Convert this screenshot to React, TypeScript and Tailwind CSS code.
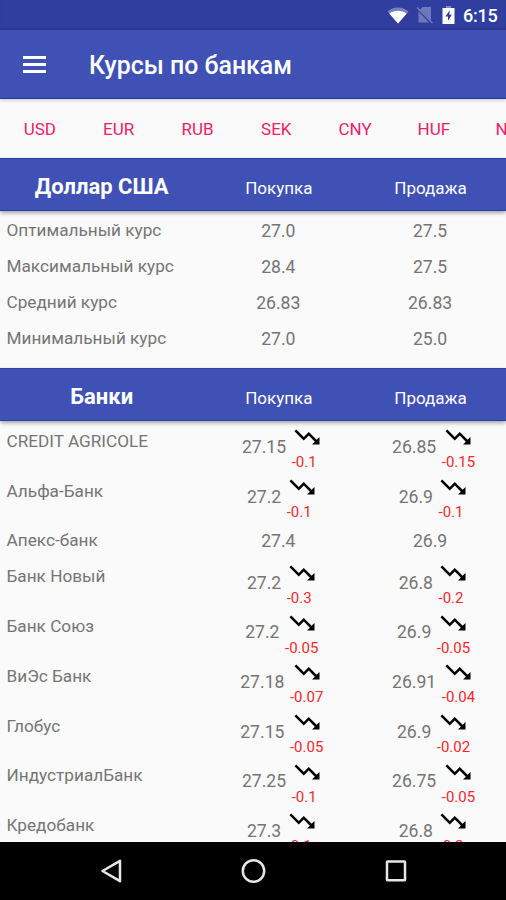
import { MdTrendingDown } from 'react-icons/md'

type Quote = {
  value: string
  change?: string
}

type Bank = {
  name: string
  buy: Quote
  sell: Quote
}

const CURRENCIES = ['USD', 'EUR', 'RUB', 'SEK', 'CNY', 'HUF', 'NOK']

const SUMMARY = [
  { label: 'Оптимальный курс', buy: '27.0', sell: '27.5' },
  { label: 'Максимальный курс', buy: '28.4', sell: '27.5' },
  { label: 'Средний курс', buy: '26.83', sell: '26.83' },
  { label: 'Минимальный курс', buy: '27.0', sell: '25.0' },
]

const BANKS: Bank[] = [
  { name: 'CREDIT AGRICOLE', buy: { value: '27.15', change: '-0.1' }, sell: { value: '26.85', change: '-0.15' } },
  { name: 'Альфа-Банк', buy: { value: '27.2', change: '-0.1' }, sell: { value: '26.9', change: '-0.1' } },
  { name: 'Апекс-банк', buy: { value: '27.4' }, sell: { value: '26.9' } },
  { name: 'Банк Новый', buy: { value: '27.2', change: '-0.3' }, sell: { value: '26.8', change: '-0.2' } },
  { name: 'Банк Союз', buy: { value: '27.2', change: '-0.05' }, sell: { value: '26.9', change: '-0.05' } },
  { name: 'ВиЭс Банк', buy: { value: '27.18', change: '-0.07' }, sell: { value: '26.91', change: '-0.04' } },
  { name: 'Глобус', buy: { value: '27.15', change: '-0.05' }, sell: { value: '26.9', change: '-0.02' } },
  { name: 'ИндустриалБанк', buy: { value: '27.25', change: '-0.1' }, sell: { value: '26.75', change: '-0.05' } },
  { name: 'Кредобанк', buy: { value: '27.3', change: '-0.1' }, sell: { value: '26.8', change: '-0.2' } },
]

function StatusBar() {
  return (
    <div className="flex h-[30px] shrink-0 items-center justify-end bg-[#303f9f] pr-[9px] text-white shadow-[inset_0_-2px_2px_rgba(0,0,0,0.12)]">
      <svg width="22" height="18" viewBox="0 0 22 18" className="mr-[7px]">
        <path d="M0.5 5.5C6.5 0.2 15.5 0.2 21.5 5.5L11 17.5Z" fill="#fff" fillOpacity="0.35" />
        <path d="M2.3 7.4C7.5 3.8 14.5 3.8 19.7 7.4L11 17.5Z" fill="#fff" />
      </svg>
      <svg width="18" height="18" viewBox="0 0 18 18" className="mr-[8px]">
        <path d="M6.5 1H15V14.2L4 3.5Z" fill="#fff" fillOpacity="0.3" />
        <path d="M2.5 5.5L13 16.5H2.5Z" fill="#fff" fillOpacity="0.3" />
        <path d="M1 1.5L16.5 17" stroke="#fff" strokeOpacity="0.35" strokeWidth="1.3" />
      </svg>
      <svg width="13" height="18" viewBox="0 0 13 18" className="mr-[8px]">
        <path d="M4 0H9V2H4Z" fill="#fff" fillOpacity="0.4" />
        <path d="M0.5 2H12.5V18H0.5Z" fill="#fff" />
        <path d="M7.8 4.2L3.4 10.4H6V14.8L9.8 8.8H7.4Z" fill="#303f9f" />
      </svg>
      <span className="w-[34px] pt-px text-[18px] leading-none font-medium tracking-[-0.2px]">6:15</span>
    </div>
  )
}

function Toolbar() {
  return (
    <div className="z-10 flex h-[69px] shrink-0 items-center border-b border-[#2039a0] bg-[#3f51b5] pl-[23px] shadow-[0_2px_3px_rgba(0,0,0,0.15)]">
      <div className="mr-[43px] flex w-[23px] flex-col gap-[4px]">
        <div className="h-[3px] bg-white" />
        <div className="h-[3px] bg-white" />
        <div className="h-[3px] bg-white" />
      </div>
      <h1 className="pt-[4px] text-[24.9px] leading-none font-medium whitespace-nowrap text-white">Курсы по банкам</h1>
    </div>
  )
}

function SectionHeader({ title }: { title: string }) {
  return (
    <div className="z-10 grid h-[53px] shrink-0 grid-cols-[4fr_3fr_3fr] items-center border-y border-[#2a40a8] bg-[#3f51b5] text-center text-white shadow-[0_2px_4px_rgba(0,0,0,0.35)]">
      <h2 className="pt-px pl-px text-[22px] leading-[54px] font-bold">{title}</h2>
      <span className="pt-[5px] pl-px text-[17px]">Покупка</span>
      <span className="pt-[5px] pl-px text-[17px]">Продажа</span>
    </div>
  )
}

function QuoteCell({ quote }: { quote: Quote }) {
  if (!quote.change) {
    return <div className="h-[36px] pt-px text-center text-[17.6px] leading-[36px]">{quote.value}</div>
  }
  return (
    <div className="flex h-[49.7px] items-center justify-center gap-[5.5px] pl-[7px]">
      <span className="text-[17.6px]">{quote.value}</span>
      <div className="flex flex-col">
        <MdTrendingDown className="size-[30px] self-center text-black" />
        <span className="text-[15px] leading-[20px] text-[#f3282b]">{quote.change}</span>
      </div>
    </div>
  )
}

export default function App() {
  return (
    <div className="flex h-[900px] w-[506px] flex-col overflow-hidden bg-[#fafafa] font-[Roboto,sans-serif] text-[#757575]">
      <StatusBar />
      <Toolbar />

      {/* Currency tabs */}
      <div className="flex h-[59px] shrink-0 items-center overflow-hidden pt-[2px] pl-[0.5px]">
        {CURRENCIES.map((c) => (
          <div key={c} className="w-[78.8px] shrink-0 text-center text-[17px] text-[#ec2068]">
            {c}
          </div>
        ))}
      </div>

      <SectionHeader title="Доллар США" />
      <div className="h-[157px] shrink-0 pt-[2px]">
        {SUMMARY.map((row) => (
          <div key={row.label} className="grid h-[36px] grid-cols-[4fr_3fr_3fr] items-center">
            <span className="pl-[6.5px] text-[17.2px] whitespace-nowrap">{row.label}</span>
            <span className="text-center text-[17.6px]">{row.buy}</span>
            <span className="text-center text-[17.6px]">{row.sell}</span>
          </div>
        ))}
      </div>

      <SectionHeader title="Банки" />
      <div className="min-h-0 flex-1 overflow-hidden pt-[1.6px]">
        {BANKS.map((bank) => (
          <div key={bank.name} className="grid grid-cols-[4fr_3fr_3fr]">
            <span className="h-[36px] pt-[0.5px] pl-[6.5px] text-[17.2px] leading-[36px] whitespace-nowrap">
              {bank.name}
            </span>
            <QuoteCell quote={bank.buy} />
            <QuoteCell quote={bank.sell} />
          </div>
        ))}
      </div>

      {/* System navigation */}
      <div className="flex h-[58px] shrink-0 items-center bg-black pl-[99px]">
        <svg width="310" height="28" viewBox="0 0 310 28" fill="none" stroke="#e6e6e6" strokeWidth="2.5">
          <path d="M3.5 14L21 3.8V24.2Z" strokeLinejoin="round" />
          <circle cx="154.5" cy="14" r="10.7" />
          <rect x="288" y="4.6" width="18" height="18.6" rx="0.5" />
        </svg>
      </div>
    </div>
  )
}
